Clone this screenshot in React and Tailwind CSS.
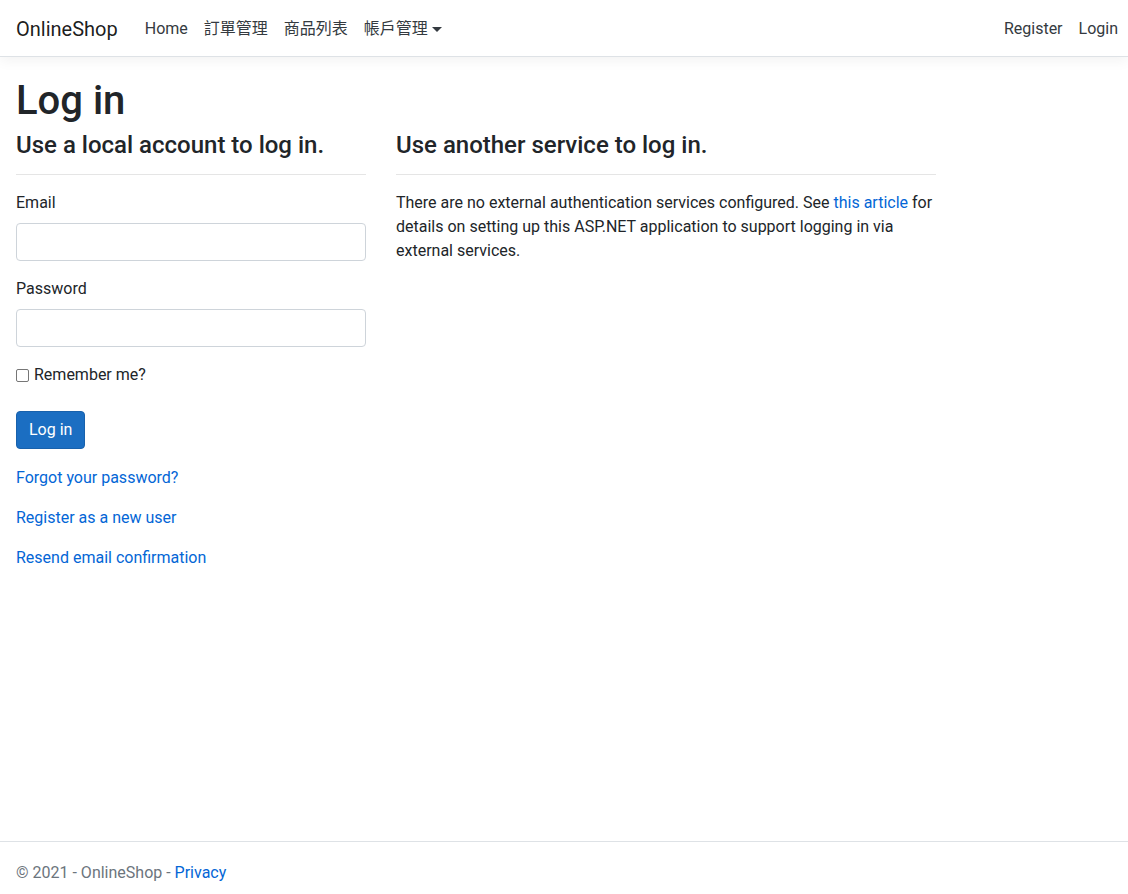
import React from 'react';

const font = "font-['Roboto','Noto_Sans_CJK_TC',sans-serif]";

function NavLink({ children, caret }) {
  return (
    <a href="#" className="flex items-center px-2 py-2 text-[#343a40] leading-6">
      {children}
      {caret && (
        <span className="ml-[4px] inline-block h-0 w-0 border-x-[5px] border-t-[5px] border-x-transparent border-t-[#343a40]" />
      )}
    </a>
  );
}

export default function App() {
  return (
    <div className={`${font} flex min-h-[894px] flex-col overflow-hidden bg-white text-base text-[#212529]`}>
      <nav className="flex h-[57px] items-center justify-between border-b border-[#dee2e6] bg-white pt-[2px] pl-4 pr-[2px] shadow-[0_4px_12px_rgba(0,0,0,0.05)]">
        <div className="flex items-center">
          <a href="#" className="mr-[19px] py-[5px] text-xl leading-[30px] text-black/90">OnlineShop</a>
          <NavLink>Home</NavLink>
          <NavLink>訂單管理</NavLink>
          <NavLink>商品列表</NavLink>
          <NavLink caret>帳戶管理</NavLink>
        </div>
        <div className="flex items-center">
          <NavLink>Register</NavLink>
          <NavLink>Login</NavLink>
        </div>
      </nav>

      <main className="flex-1 px-4 pt-[17px]">
        <h1 className="pt-[3px] text-[40px] font-medium leading-[48px]">Log in</h1>
        <div className="mt-[6px] flex">
          <section className="w-[350px] shrink-0">
            <h4 className="text-2xl font-medium leading-[29px]">Use a local account to log in.</h4>
            <hr className="mt-[14px] mb-4 border-t border-black/10" />
            <div className="mb-4">
              <label className="mb-2 block leading-6">Email</label>
              <input className="block h-[38px] w-full rounded border border-[#ced4da] px-3" />
            </div>
            <div className="mb-4">
              <label className="mb-2 block leading-6">Password</label>
              <input type="password" className="block h-[38px] w-full rounded border border-[#ced4da] px-3" />
            </div>
            <div className="pb-6">
              <label className="flex items-center leading-6">
                <span className="mr-[5px] inline-block h-[13px] w-[13px] rounded-[2px] border border-[#767676] bg-white" />
                Remember me?
              </label>
            </div>
            <div className="mb-4">
              <button className="h-[38px] rounded border border-[#1861ac] bg-[#1b6ec2] px-3 leading-6 text-white">Log in</button>
            </div>
            <div className="flex flex-col gap-4 pt-px leading-6">
              <a href="#" className="text-[#0366d6]">Forgot your password?</a>
              <a href="#" className="text-[#0366d6]">Register as a new user</a>
              <a href="#" className="text-[#0366d6]">Resend email confirmation</a>
            </div>
          </section>
          <section className="ml-[30px] w-[540px] shrink-0">
            <h4 className="text-2xl font-medium leading-[29px]">Use another service to log in.</h4>
            <hr className="mt-[14px] mb-4 border-t border-black/10" />
            <p className="leading-6">
              There are no external authentication services configured. See{' '}
              <a href="#" className="text-[#0366d6]">this article</a> for details on setting up this ASP.NET application to support logging in via external services.
            </p>
          </section>
        </div>
      </main>

      <footer className="h-[53px] border-t border-[#dee2e6] px-4 leading-[62px] whitespace-nowrap text-[#6c757d]">
        © 2021 - OnlineShop - <a href="#" className="text-[#0366d6]">Privacy</a>
      </footer>
    </div>
  );
}
